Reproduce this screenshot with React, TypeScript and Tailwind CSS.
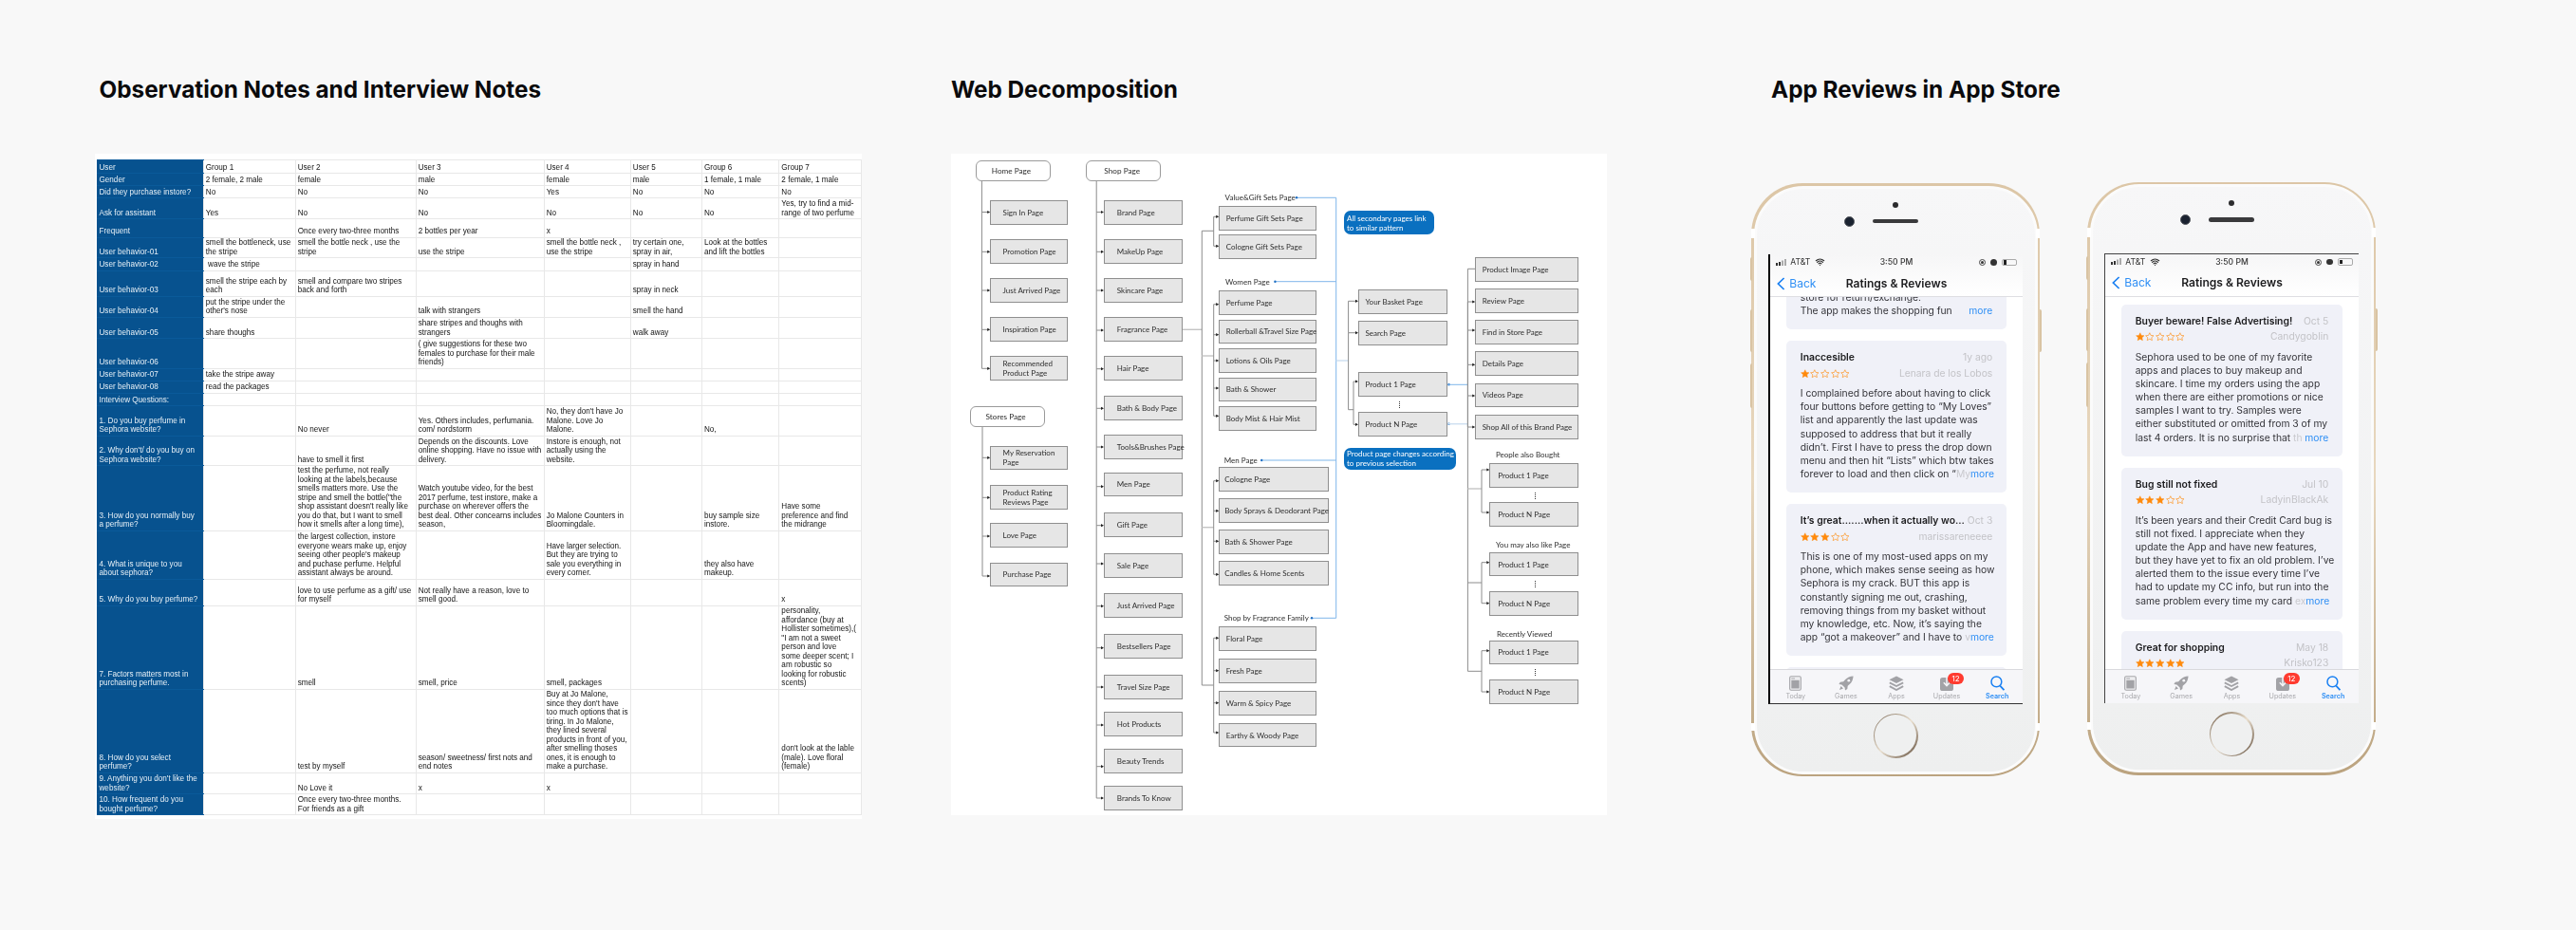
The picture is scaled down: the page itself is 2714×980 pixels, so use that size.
import React from "react";
import { Wifi } from "lucide-react";

const colClasses = ["w-[112.8px]", "w-[96.9px]", "w-[127px]", "w-[135px]", "w-[91.1px]", "w-[75.2px]", "w-[81.4px]", "w-[87px]"];

const rows: [number, string[]][] = [
  [14, ["User", "Group 1", "User 2", "User 3", "User 4", "User 5", "Group 6", "Group 7"]],
  [13, ["Gender", "2 female, 2 male", "female", "male", "female", "male", "1 female, 1 male", "2 female, 1 male"]],
  [13, ["Did they purchase instore?", "No", "No", "No", "Yes", "No", "No", "No"]],
  [22.4, ["Ask for assistant", "Yes", "No", "No", "No", "No", "No", "Yes, try to find a mid-\nrange of two perfume"]],
  [19.3, ["Frequent", "", "Once every two-three months", "2 bottles per year", "x", "", "", ""]],
  [21.7, ["User behavior-01", "smell the bottleneck, use\nthe stripe", "smell the bottle neck , use the\nstripe", "use the stripe", "smell the bottle neck ,\nuse the stripe", "try certain one,\nspray in air,", "Look at the bottles\nand lift the bottles", ""]],
  [13.3, ["User behavior-02", " wave the stripe", "", "", "", "spray in hand", "", ""]],
  [27.3, ["User behavior-03", "smell the stripe each by\neach", "smell and compare two stripes\nback and forth", "", "", "spray in neck", "", ""]],
  [22, ["User behavior-04", "put the stripe under the\nother's nose", "", "talk with strangers", "", "smell the hand", "", ""]],
  [22.4, ["User behavior-05", "share thoughs", "", "share stripes and thoughs with\nstrangers", "", "walk away", "", ""]],
  [31.6, ["User behavior-06", "", "", "( give suggestions for these two\nfemales to purchase for their male\nfriends)", "", "", "", ""]],
  [13, ["User behavior-07", "take the stripe away", "", "", "", "", "", ""]],
  [13, ["User behavior-08", "read the packages", "", "", "", "", "", ""]],
  [13.4, ["Interview Questions:", "", "", "", "", "", "", ""]],
  [31.6, ["1. Do you buy perfume in\nSephora website?", "", "No never", "Yes. Others includes, perfumania.\ncom/ nordstorm", "No, they don't have Jo\nMalone. Love Jo\nMalone.", "", "No,", ""]],
  [31.4, ["2. Why don't/ do you buy on\nSephora website?", "", "have to smell it first", "Depends on the discounts. Love\nonline shopping. Have no issue with\ndelivery.", "Instore is enough, not\nactually using the\nwebsite.", "", "", ""]],
  [68.6, ["3. How do you normally buy\na perfume?", "", "test the perfume, not really\nlooking at the labels,because\nsmells matters more. Use the\nstripe and smell the bottle(\"the\nshop assistant doesn't really like\nyou do that, but I want to smell\nhow it smells after a long time),", "Watch youtube video, for the best\n2017 perfume, test instore, make a\npurchase on wherever offers the\nbest deal. Other concearns includes\nseason,", "Jo Malone Counters in\nBloomingdale.", "", "buy sample size\ninstore.", "Have some\npreference and find\nthe midrange"]],
  [50.7, ["4. What is unique to you\nabout sephora?", "", "the largest collection, instore\neveryone wears make up, enjoy\nseeing other people's makeup\nand puchase perfume. Helpful\nassistant always be around.", "", "Have larger selection.\nBut they are trying to\nsale you everything in\nevery corner.", "", "they also have\nmakeup.", ""]],
  [28.3, ["5. Why do you buy perfume?", "", "love to use perfume as a gift/ use\nfor myself", "Not really have a reason, love to\nsmell good.", "", "", "", "x"]],
  [87.7, ["7. Factors matters most in\npurchasing perfume.", "", "smell", "smell, price", "smell, packages", "", "", "personality,\naffordance (buy at\nHollister sometimes),(\n\"I am not a sweet\nperson and love\nsome deeper scent; I\nam robustic so\nlooking for robustic\nscents)"]],
  [88.3, ["8. How do you select\nperfume?", "", "test by myself", "season/ sweetness/ first nots and\nend notes", "Buy at Jo Malone,\nsince they don't have\ntoo much options that is\ntiring. In Jo Malone,\nthey lined several\nproducts in front of you,\nafter smelling thoses\nones, it is enough to\nmake a purchase.", "", "", "don't look at the lable\n(male). Love floral\n(female)"]],
  [22.4, ["9. Anything you don't like the\nwebsite?", "", "No Love it", "x", "x", "", "", ""]],
  [22, ["10. How frequent do you\nbought perfume?", "", "Once every two-three months.\nFor friends as a gift", "", "", "", "", ""]],
];

function NotesTable() {
  return (
    <div className="w-[808.5px] h-[701px] bg-white pl-[2px] pt-[6px] blur-[0.3px]">
      <table className="table-fixed border-collapse w-[806.4px] font-['Liberation_Sans',Arial,sans-serif] text-[8.15px] leading-[9.5px]">
        <colgroup>
          {colClasses.map((c) => (
            <col key={c} className={c} />
          ))}
        </colgroup>
        <tbody>
          {rows.map(([h, cells], i) => (
            <tr key={i} style={{ height: h }}>
              {cells.map((c, j) => (
                <td
                  key={j}
                  className={
                    j === 0
                      ? "bg-[#07528f] text-[#e6eff6] align-bottom pl-[3px] pb-[1px] whitespace-pre border-y border-[#0a5a9a]"
                      : "text-[#141414] align-bottom pl-[2px] pb-[1px] whitespace-pre border border-[#e8e8e8]"
                  }
                >
                  {c}
                </td>
              ))}
            </tr>
          ))}
        </tbody>
      </table>
    </div>
  );
}

type Box = [number, number, number, number, string, number];

const colA = 1043.2, colAe = 1125.3, colB = 1163, colBe = 1246, colC = 1284.2, colCe = 1387.5, colM = 1400.4, colD = 1431, colDe = 1525.3, colE = 1554.2, colEe = 1663.4, colF = 1569.3;

const boxes: Box[] = [
  [colA, 211, colAe, 236.7, "Sign In Page", 12.4],
  [colA, 252.3, colAe, 277.7, "Promotion Page", 12.4],
  [colA, 293.3, colAe, 319, "Just Arrived Page", 12.4],
  [colA, 334.3, colAe, 360, "Inspiration Page", 12.4],
  [colA, 375.3, colAe, 401.3, "Recommended\nProduct Page", 12.4],
  [colA, 469.7, colAe, 495.3, "My Reservation\nPage", 12.4],
  [colA, 511, colAe, 536.7, "Product Rating\nReviews Page", 12.4],
  [colA, 551, colAe, 576.7, "Love Page", 12.4],
  [colA, 592.7, colAe, 618.3, "Purchase Page", 12.4],
  [colB, 211, colBe, 236.7, "Brand Page", 12.8],
  [colB, 252.3, colBe, 277.7, "MakeUp Page", 12.8],
  [colB, 293.3, colBe, 319, "Skincare Page", 12.8],
  [colB, 334.3, colBe, 360, "Fragrance Page", 12.8],
  [colB, 375.3, colBe, 401.3, "Hair Page", 12.8],
  [colB, 416.7, colBe, 442.7, "Bath & Body Page", 12.8],
  [colB, 458, colBe, 483.7, "Tools&Brushes Page", 12.8],
  [colB, 497.7, colBe, 523.3, "Men Page", 12.8],
  [colB, 540.3, colBe, 566, "Gift Page", 12.8],
  [colB, 583, colBe, 608.7, "Sale Page", 12.8],
  [colB, 625.3, colBe, 651.3, "Just Arrived Page", 12.8],
  [colB, 668.3, colBe, 694, "Bestsellers Page", 12.8],
  [colB, 710.7, colBe, 736.7, "Travel Size Page", 12.8],
  [colB, 750, colBe, 775.7, "Hot Products", 12.8],
  [colB, 789.3, colBe, 815, "Beauty Trends", 12.8],
  [colB, 828.3, colBe, 854, "Brands To Know", 12.8],
  [colC, 217.3, colCe, 243.3, "Perfume Gift Sets Page", 6.5],
  [colC, 247.3, colCe, 273.3, "Cologne Gift Sets Page", 6.5],
  [colC, 306.3, colCe, 332, "Perfume Page", 6.5],
  [colC, 336.7, colCe, 362.3, "Rollerball &Travel Size Page", 6.5],
  [colC, 367.3, colCe, 393, "Lotions & Oils Page", 6.5],
  [colC, 397.7, colCe, 423.3, "Bath & Shower", 6.5],
  [colC, 428.3, colCe, 454, "Body Mist & Hair Mist", 6.5],
  [colC, 492.3, colM, 518.3, "Cologne Page", 5],
  [colC, 525.3, colM, 551, "Body Sprays & Deodorant Page", 5],
  [colC, 558.3, colM, 584, "Bath & Shower Page", 5],
  [colC, 591, colM, 616.7, "Candles & Home Scents", 5],
  [colC, 660, colCe, 685.7, "Floral Page", 6.5],
  [colC, 694, colCe, 719.7, "Fresh Page", 6.5],
  [colC, 728, colCe, 753.7, "Warm & Spicy Page", 6.5],
  [colC, 762, colCe, 787.3, "Earthy & Woody Page", 6.5],
  [colD, 304.7, colDe, 330.7, "Your Basket Page", 6.5],
  [colD, 338.3, colDe, 364, "Search Page", 6.5],
  [colD, 392.3, colDe, 418.3, "Product 1 Page", 6.5],
  [colD, 434, colDe, 459.7, "Product N Page", 6.5],
  [colE, 271, colEe, 296.7, "Product Image Page", 6.5],
  [colE, 304.3, colEe, 330, "Review Page", 6.5],
  [colE, 337.3, colEe, 363, "Find in Store Page", 6.5],
  [colE, 370.3, colEe, 396.3, "Details Page", 6.5],
  [colE, 403.7, colEe, 429.3, "Videos Page", 6.5],
  [colE, 436.7, colEe, 462.7, "Shop All of this Brand Page", 6.5],
  [colF, 488.3, colEe, 514, "Product 1 Page", 8],
  [colF, 529.3, colEe, 555.3, "Product N Page", 8],
  [colF, 582, colEe, 607.3, "Product 1 Page", 8],
  [colF, 623.3, colEe, 648.7, "Product N Page", 8],
  [colF, 674.7, colEe, 700.3, "Product 1 Page", 8],
  [colF, 716.3, colEe, 741.7, "Product N Page", 8],
];

const pills: [number, number, string][] = [
  [1027.5, 169.3, "Home Page"],
  [1144.2, 169.3, "Shop Page"],
  [1021.6, 428.3, "Stores Page"],
];

const labels: [number, number, string][] = [
  [1290.6, 208.3, "Value&Gift Sets Page"],
  [1291, 297, "Women Page"],
  [1289.7, 485, "Men Page"],
  [1289.7, 651.3, "Shop by Fragrance Family"],
  [1576, 479, "People also Bought"],
  [1576, 574.3, "You may also like Page"],
  [1577, 667.7, "Recently Viewed"],
];

const callouts: [number, number, number, number, string][] = [
  [1416, 222, 95, 25.3, "All secondary pages link\nto similar pattern"],
  [1416, 471.7, 118, 23.3, "Product page changes according\nto previous selection"],
];

const dots: [number, number][] = [[1474, 426], [1616.5, 521.7], [1616.5, 615], [1616.5, 708.3]];

function Bracket({ x, from, ys, end }: { x: number; from?: number; ys: number[]; end: number }) {
  const top = from ?? ys[0];
  const bottom = ys[ys.length - 1];
  return (
    <g>
      <line x1={x} y1={top} x2={x} y2={bottom} stroke="#8c8c8c" strokeWidth="1" />
      {ys.map((y) => (
        <g key={y}>
          <line x1={x} y1={y} x2={end - 1} y2={y} stroke="#8c8c8c" strokeWidth="1" />
          <path d={`M${end - 3} ${y - 1.6}L${end} ${y}L${end - 3} ${y + 1.6}Z`} fill="#222" />
        </g>
      ))}
    </g>
  );
}

function Hline({ x1, x2, y, c = "#8c8c8c", w = 1 }: { x1: number; x2: number; y: number; c?: string; w?: number }) {
  return <line x1={x1} y1={y} x2={x2} y2={y} stroke={c} strokeWidth={w} />;
}

function Diagram() {
  const ox = 1002;
  const oy = 162;
  const blue = "#7fb6ea";
  const light = "#cfe0f1";
  return (
    <div className="relative w-[691px] h-[697px] bg-white overflow-hidden blur-[0.25px] font-['Lato',sans-serif] text-[#2e2e2e]">
      <svg className="absolute left-0 top-0 w-[691px] h-[697px]" viewBox="1002 162 691 697">
        <Bracket x={1034.4} from={191} ys={[223.5, 265.3, 306, 347.3, 388.3]} end={colA} />
        <Bracket x={1035} from={450} ys={[482.3, 524.3, 565, 607]} end={colA} />
        <Bracket x={1155.2} from={191} ys={[223.5, 265.3, 306, 348, 388.7, 430.3, 471, 512.7, 553.7, 594, 638.7, 682.7, 724, 764, 807.7, 841]} end={colB} />
        <Hline x1={1246} x2={1266.3} y={347.3} c="#c4c4c4" w={1.4} />
        <line x1={1266.3} y1={243.3} x2={1266.3} y2={722} stroke="#8c8c8c" />
        <Hline x1={1266.3} x2={1278.7} y={243.3} />
        <Hline x1={1266.3} x2={1278.7} y={375} c="#c4c4c4" w={1.4} />
        <Hline x1={1266.3} x2={1278.7} y={555.7} c="#c4c4c4" w={1.4} />
        <Hline x1={1266.3} x2={1278.7} y={722} />
        <Bracket x={1278.7} ys={[228.3, 259.3]} end={colC} />
        <Bracket x={1278.7} ys={[320.7, 352.7, 380, 409, 438.3]} end={colC} />
        <Bracket x={1278.7} ys={[506.7, 538.3, 570.3, 605.3]} end={colC} />
        <Bracket x={1278.7} ys={[672.3, 706.7, 740.7, 772]} end={colC} />
        <line x1={1407.7} y1={208.3} x2={1407.7} y2={651.3} stroke={blue} />
        <Hline x1={1366} x2={1407.7} y={208.3} c={blue} />
        <Hline x1={1343.4} x2={1407.7} y={296.7} c={blue} />
        <Hline x1={1329.2} x2={1407.7} y={485} c={blue} />
        <Hline x1={1382} x2={1407.7} y={651.3} c={blue} />
        {[[1366, 208.3], [1343.4, 296.7], [1329.2, 485], [1382, 651.3], [1526.5, 405.3], [1526.5, 446.7]].map(([x, y]) => (
          <circle key={y} cx={x} cy={y} r="1.2" fill="#1f6fc4" />
        ))}
        <Hline x1={1407.7} x2={1420.6} y={380} c={light} w={1.5} />
        <Bracket x={1420.6} ys={[317.3, 350.7]} end={colD} />
        <line x1={1420.6} y1={350.7} x2={1420.6} y2={431.7} stroke="#8c8c8c" />
        <Hline x1={1420.6} x2={1426} y={431.7} />
        <Bracket x={1426} ys={[402, 447.3]} end={colD} />
        <Hline x1={1525.3} x2={1546.4} y={405.3} c={blue} />
        <Hline x1={1525.3} x2={1546.4} y={446.7} c={light} w={1.5} />
        <line x1={1546.4} y1={283.3} x2={1546.4} y2={707.3} stroke="#8c8c8c" />
        <Hline x1={1546.4} x2={colE} y={283.3} />
        <Bracket x={1546.4} ys={[318, 348, 384.3, 417, 450]} end={colE} />
        <Hline x1={1546.4} x2={1561} y={515} c="#c4c4c4" w={1.4} />
        <Hline x1={1546.4} x2={1561} y={614} />
        <Hline x1={1546.4} x2={1561} y={707.3} />
        <Bracket x={1561} ys={[495, 540]} end={colF} />
        <Bracket x={1561} ys={[592.7, 635.7]} end={colF} />
        <Bracket x={1561} ys={[685.7, 729]} end={colF} />
      </svg>
      {pills.map(([x, y, t]) => (
        <div
          key={t}
          className="absolute w-[79px] h-[22px] bg-white border border-[#9a9a9a] rounded-[6px] flex items-center justify-center pr-[3px] text-[8.2px]"
          style={{ left: x - ox, top: y - oy }}
        >
          {t}
        </div>
      ))}
      {boxes.map(([x0, y0, x1, y1, t, p], i) => (
        <div
          key={i}
          className="absolute bg-[#e6e6e6] border border-[#8f8f8f] flex items-center whitespace-pre text-[8px] leading-[10px]"
          style={{ left: x0 - ox, top: y0 - oy, width: x1 - x0, height: y1 - y0, paddingLeft: p }}
        >
          {t}
        </div>
      ))}
      {labels.map(([x, y, t]) => (
        <div
          key={t}
          className="absolute h-[12px] flex items-center whitespace-pre text-[8px]"
          style={{ left: x - ox, top: y - oy - 6 }}
        >
          {t}
        </div>
      ))}
      {callouts.map(([x, y, w, h, t]) => (
        <div
          key={t}
          className="absolute bg-[#0a70c0] text-white rounded-[7px] flex items-center whitespace-pre pl-[3px] text-[8px] leading-[10px]"
          style={{ left: x - ox, top: y - oy, width: w, height: h }}
        >
          {t}
        </div>
      ))}
      {dots.map(([x, y]) => (
        <div
          key={y}
          className="absolute w-[1px] h-[7px] border-l border-dotted border-[#333]"
          style={{ left: x - ox, top: y - oy - 3 }}
        />
      ))}
    </div>
  );
}

function Star({ on }: { on: boolean }) {
  return (
    <svg viewBox="0 0 20 20" className="w-[9.6px] h-[9.6px] mr-[1px]">
      <path
        d="M10 1.5l2.6 5.6 6.1.7-4.5 4.2 1.2 6L10 15l-5.4 3 1.2-6L1.3 7.8l6.1-.7z"
        fill={on ? "#ff8a0c" : "none"}
        stroke="#ff8a0c"
        strokeWidth={on ? 1 : 1.3}
        strokeLinejoin="round"
      />
    </svg>
  );
}

type Review = { title: string; date: string; author: string; stars: number; lines: string[]; last: string; fade: string; more: boolean };

function Card({ r }: { r: Review }) {
  return (
    <div className="shrink-0 h-[160px] mx-[17px] bg-[#f0f1f8] rounded-[5px] px-[14.5px] pt-[11px] overflow-hidden">
      <div className="flex justify-between h-[14px] items-center whitespace-nowrap">
        <span className="text-[10.4px] font-semibold text-[#1c1c1e] whitespace-pre">{r.title}</span>
        <span className="text-[10.3px] text-[#c3c3c7] shrink-0">{r.date}</span>
      </div>
      <div className="flex justify-between items-center h-[15px] mt-[2px]">
        <span className="flex">
          {r.stars > 0 && [0, 1, 2, 3, 4].map((i) => <Star key={i} on={i < r.stars} />)}
        </span>
        <span className="text-[10.3px] text-[#c3c3c7]">{r.author}</span>
      </div>
      <div className="mt-[6px] text-[10.3px] leading-[14.2px] text-[#333338]">
        {r.lines.map((l, i) => (
          <div key={i} className="whitespace-pre h-[14.2px]">
            {l}
          </div>
        ))}
        {r.more && (
          <div className="flex justify-between whitespace-pre">
            <span>
              {r.last}
              <span className="text-[#c9c9ce]">{r.fade}</span>
            </span>
            <span className="text-[#2f8ff5]">more</span>
          </div>
        )}
      </div>
    </div>
  );
}

function TabIcon({ name }: { name: string }) {
  if (name === "Today")
    return (
      <svg viewBox="0 0 14 17" className="w-[13px] h-[16px]">
        <rect x="0.7" y="0.7" width="12.6" height="15.6" rx="1.6" fill="#eeeef0" stroke="#a6a6aa" strokeWidth="1.2" />
        <rect x="2.5" y="2.6" width="4" height="1" fill="#a6a6aa" />
        <rect x="2.5" y="5" width="9" height="9.4" fill="#a2a2a6" />
      </svg>
    );
  if (name === "Games")
    return (
      <svg viewBox="0 0 16 16" className="w-[16px] h-[16px]">
        <path d="M15.6.4c-3.6.2-6.3 1.4-8.4 3.7L5.2 6.3l-3.4.4L.4 9l3 .4 3.2 3.2.4 3 2.3-1.5.4-3.3 2-1.9C14 7 15.3 4 15.6.4Z" fill="#a2a2a6" />
        <circle cx="10.8" cy="5.2" r="1.4" fill="#f4f4f7" />
        <path d="M2.6 11 1 15l4-1.6z" fill="#a2a2a6" />
      </svg>
    );
  if (name === "Apps")
    return (
      <svg viewBox="0 0 16 16" className="w-[16px] h-[16px]">
        <path d="M8 .5l7.5 3.7L8 8 .5 4.2z" fill="#a2a2a6" />
        <path d="M.8 7.4 8 11l7.2-3.6M.8 11.2 8 15l7.2-3.8" fill="none" stroke="#a2a2a6" strokeWidth="1.9" />
      </svg>
    );
  if (name === "Updates")
    return (
      <svg viewBox="0 0 14 17" className="w-[14px] h-[17px]">
        <rect x="0" y="3" width="14" height="14" rx="2.6" fill="#a2a2a6" />
        <path d="M7 0v11M3.8 8.2 7 11.6l3.2-3.4" fill="none" stroke="#f4f4f7" strokeWidth="1.5" />
      </svg>
    );
  return (
    <svg viewBox="0 0 15 16" className="w-[15px] h-[16px]">
      <circle cx="6.4" cy="6.4" r="5.4" fill="none" stroke="#1a80f2" strokeWidth="1.5" />
      <path d="M10.2 10.6 14.4 15.2" stroke="#1a80f2" strokeWidth="1.7" />
    </svg>
  );
}

function Phone({ reviews, first, screenBorder, className }: { reviews: Review[]; first: string; screenBorder: string; className: string }) {
  return (
    <div className={`relative w-[304px] h-[625px] shrink-0 ${className}`}>
      <div className="absolute left-[-1.5px] top-[78px] w-[2px] h-[25px] bg-[#d9c4a3] rounded-l" />
      <div className="absolute left-[-1.5px] top-[133px] w-[2px] h-[45px] bg-[#d9c4a3] rounded-l" />
      <div className="absolute left-[-1.5px] top-[190px] w-[2px] h-[47px] bg-[#d9c4a3] rounded-l" />
      <div className="absolute right-[-1.5px] top-[133px] w-[2px] h-[45px] bg-[#d9c4a3] rounded-r" />
      <div className="h-full rounded-[54px] bg-gradient-to-b from-[#dcc6a6] via-[#e8d8bf] to-[#bba37f] p-[2.5px]">
        <div className="h-full rounded-[52px] border-[3px] border-[#fbfbfb] bg-gradient-to-b from-[#f7f7f8] to-[#eeefef] flex flex-col items-center blur-[0.2px]">
          <div className="h-[69.5px] w-full flex flex-col items-center shrink-0">
            <div className="mt-[14px] w-[6px] h-[6px] rounded-full bg-[#2c2c2e]" />
            <div className="relative mt-[12px] w-[48px] h-[4.5px] rounded-full bg-[#3a3a3c]">
              <div className="absolute left-[-30px] top-[-3px] w-[11px] h-[11px] rounded-full bg-[#1a2230] border border-[#55585e]" />
            </div>
          </div>
          <div className={`w-[267.5px] h-[474px] shrink-0 bg-white flex flex-col overflow-hidden ${screenBorder}`}>
            <div className="relative z-10 shrink-0 h-[45px] bg-gradient-to-b from-[#f6f6f7] to-[#ffffff] border-b border-[#dedee2] font-['Inter',sans-serif]">
              <div className="h-[17px] px-[6px] flex items-center justify-between text-[8.6px] text-[#333] relative">
                <div className="flex items-center gap-[3px]">
                  <svg viewBox="0 0 12 7" className="w-[12px] h-[7px]">
                    <rect x="0" y="4" width="2" height="3" fill="#333" />
                    <rect x="3" y="3" width="2" height="4" fill="#333" />
                    <rect x="6" y="1.5" width="2" height="5.5" fill="#aaa" />
                    <rect x="9" y="0" width="2" height="7" fill="#aaa" />
                  </svg>
                  <span>AT&amp;T</span>
                  <Wifi className="w-[11px] h-[10px] ml-[2px]" strokeWidth={3} />
                </div>
                <span className="absolute left-0 right-0 text-center font-medium">3:50 PM</span>
                <div className="flex items-center gap-[5px]">
                  <span className="w-[7px] h-[7px] rounded-full border border-[#444] flex items-center justify-center">
                    <span className="w-[3px] h-[3px] rounded-full bg-[#333]" />
                  </span>
                  <span className="w-[6.5px] h-[6.5px] rounded-full bg-[#333]" />
                  <span className="relative w-[16px] h-[7.5px] rounded-[2px] border border-[#aaa] flex items-center pl-[1px]">
                    <span className="w-[3px] h-[4.5px] bg-[#222]" />
                  </span>
                </div>
              </div>
              <div className="relative h-[28px] flex items-center justify-center text-[12.1px] font-semibold text-[#1c1c1e]">
                <div className="absolute left-[7px] flex items-center gap-[4px] font-normal text-[#2f8ff5]">
                  <svg viewBox="0 0 9 14" className="w-[9px] h-[14px]">
                    <path d="M7.6 1 1.4 7l6.2 6" fill="none" stroke="#1a80f2" strokeWidth="1.7" />
                  </svg>
                  <span>Back</span>
                </div>
                <span>Ratings &amp; Reviews</span>
              </div>
            </div>
            <div className="flex-1 min-h-0 overflow-hidden font-['Inter',sans-serif]">
              <div className={`flex flex-col gap-[12px] ${first}`}>
                {reviews.map((r, i) => (
                  <Card key={i} r={r} />
                ))}
              </div>
            </div>
            <div className="relative z-10 shrink-0 h-[36px] bg-[#f6f6f9] border-t border-[#d9d9dd] grid grid-cols-5 font-['Inter',sans-serif]">
              {["Today", "Games", "Apps", "Updates", "Search"].map((n) => (
                <div key={n} className="relative flex flex-col items-center pt-[5px]">
                  <div className="h-[17px] flex items-end relative">
                    <TabIcon name={n} />
                    {n === "Updates" && (
                      <div className="absolute left-[8px] top-[-2px] w-[17px] h-[12px] rounded-full bg-[#ff3b30] text-white text-[8px] leading-[12px] text-center">
                        12
                      </div>
                    )}
                  </div>
                  <div className={`text-[7.2px] leading-[10px] mt-[1px] ${n === "Search" ? "text-[#2f8ff5] font-semibold" : "text-[#a8a8ac]"}`}>{n}</div>
                </div>
              ))}
            </div>
          </div>
          <div className="flex-1 flex items-center justify-center w-full">
            <div className="w-[47px] h-[47px] rounded-full bg-gradient-to-br from-[#6e5a45] via-[#eadfce] to-[#5f4c3a] p-[1.5px] mb-[4px]">
              <div className="w-full h-full rounded-full bg-[#eff0f0]" />
            </div>
          </div>
        </div>
      </div>
      <div className="absolute left-0 top-[48px] w-[4px] h-[10px] bg-white" />
      <div className="absolute right-0 top-[48px] w-[4px] h-[10px] bg-white" />
      <div className="absolute left-0 top-[569px] w-[4px] h-[8px] bg-white" />
      <div className="absolute right-0 top-[569px] w-[4px] h-[8px] bg-white" />
    </div>
  );
}

const r1: Review[] = [
  { title: "", date: "", author: "", stars: 0, lines: ["", "", "", "", "", "store for return/exchange."], last: "The app makes the shopping fun", fade: "", more: true },
  { title: "Inaccesible", date: "1y ago", author: "Lenara de los Lobos", stars: 1, lines: ["I complained before about having to click", "four buttons before getting to “My Loves”", "list and apparently the last update was", "supposed to address that but it really", "didn’t. First I have to press the drop down", "menu and then hit “Lists” which btw takes"], last: "forever to load and then click on “", fade: "My", more: true },
  { title: "It’s great.......when it actually wo...", date: "Oct 3", author: "marissareneeee", stars: 3, lines: ["This is one of my most-used apps on my", "phone, which makes sense seeing as how", "Sephora is my crack. BUT this app is", "constantly signing me out, crashing,", "removing things from my basket without", "my knowledge, etc. Now, it’s saying the"], last: "app “got a makeover” and I have to", fade: " v", more: true },
  { title: "", date: "", author: "", stars: 0, lines: [], last: "", fade: "", more: false },
];

const r2: Review[] = [
  { title: "Buyer beware! False Advertising!", date: "Oct 5", author: "Candygoblin", stars: 1, lines: ["Sephora used to be one of my favorite", "apps and places to buy makeup and", "skincare. I time my orders using the app", "when there are either promotions or nice", "samples I want to try. Samples were", "either substituted or omitted from 3 of my"], last: "last 4 orders. It is no surprise that ", fade: "th", more: true },
  { title: "Bug still not fixed", date: "Jul 10", author: "LadyinBlackAk", stars: 3, lines: ["It’s been years and their Credit Card bug is", "still not fixed. I appreciate when they", "update the App and have new features,", "but they have yet to fix an old problem. I’ve", "alerted them to the issue every time I’ve", "had to update my CC info, but run into the"], last: "same problem every time my card ", fade: "ex", more: true },
  { title: "Great for shopping", date: "May 18", author: "Krisko123", stars: 5, lines: [], last: "", fade: "", more: false },
];

export default function App() {
  const h = "h-[30px] flex items-center font-['Inter',sans-serif] font-bold text-[24.3px] text-[#0a0a0c] whitespace-pre";
  return (
    <div className="w-[2714px] h-[980px] bg-[#f8f8f8] flex items-start pt-[79px] overflow-hidden">
      <section className="w-[1002px] pl-[99.5px] shrink-0">
        <h2 className={`${h} ml-[5px]`}>Observation Notes and Interview Notes</h2>
        <div className="mt-[53px]">
          <NotesTable />
        </div>
      </section>
      <section className="w-[843px] shrink-0">
        <h2 className={h}>Web Decomposition</h2>
        <div className="mt-[53px]">
          <Diagram />
        </div>
      </section>
      <section className="shrink-0">
        <h2 className={`${h} ml-[21px]`}>App Reviews in App Store</h2>
        <div className="flex gap-[50px] mt-[82px]">
          <Phone reviews={r1} first="mt-[-126px]" screenBorder="border-l-[2.3px] border-l-black border-b border-b-[#333]" className="mt-[2px]" />
          <Phone reviews={r2} first="pt-[8px]" screenBorder="border-l border-l-[#444] border-t border-t-[#444]" className="mt-[0.5px]" />
        </div>
      </section>
    </div>
  );
}
